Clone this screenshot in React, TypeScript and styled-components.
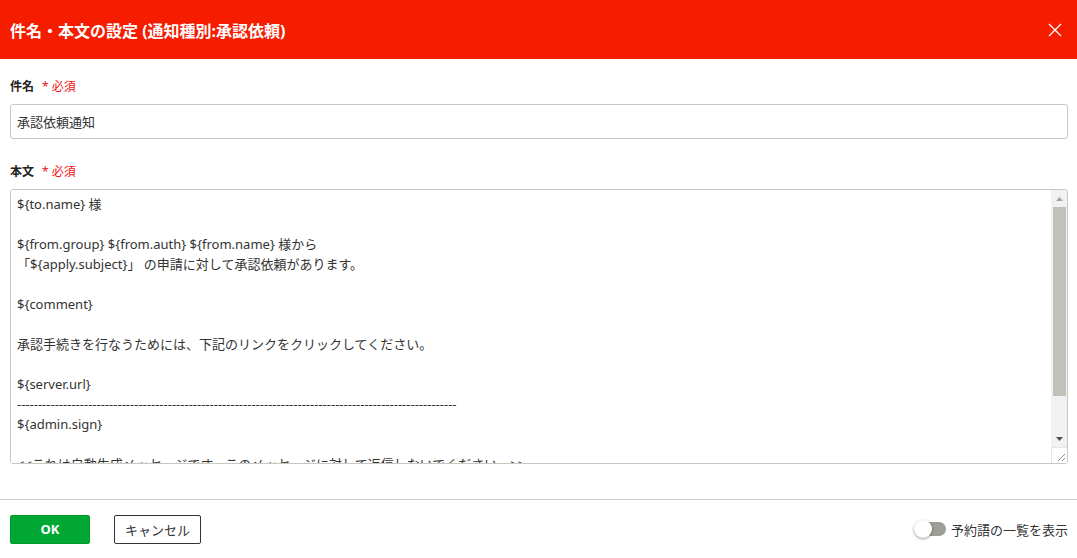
import { useState } from "react";
import { styled, createGlobalStyle } from "styled-components";

const GlobalStyle = createGlobalStyle`
  html, body {
    margin: 0;
    padding: 0;
    background: #ffffff;
    font-family: "Noto Sans", "Noto Sans CJK JP", sans-serif;
    color: #333333;
  }
  * {
    box-sizing: border-box;
  }
`;

const BODY_TEXT = `\${to.name} 様

\${from.group} \${from.auth} \${from.name} 様から
「\${apply.subject}」 の申請に対して承認依頼があります。

\${comment}

承認手続きを行なうためには、下記のリンクをクリックしてください。

\${server.url}
${"-".repeat(105)}
\${admin.sign}

<<これは自動生成メッセージです。このメッセージに対して返信しないでください。>>`;

const App = (): JSX.Element => {
  const [subject, setSubject] = useState("承認依頼通知");
  const [body, setBody] = useState(BODY_TEXT);
  const [showWords, setShowWords] = useState(false);

  return (
    <Dialog>
      <GlobalStyle />
      <Header>
        <h1>件名・本文の設定 (通知種別:承認依頼)</h1>
        <CloseButton aria-label="close">
          <svg width="14" height="14" viewBox="0 0 14 14">
            <path d="M1 1L13 13M13 1L1 13" stroke="#ffffff" strokeWidth="1.3" />
          </svg>
        </CloseButton>
      </Header>

      <Content>
        <Field>
          <Label>
            件名<Required>* 必須</Required>
          </Label>
          <TextInput
            type="text"
            value={subject}
            onChange={(e) => setSubject(e.target.value)}
          />
        </Field>

        <Field>
          <Label>
            本文<Required>* 必須</Required>
          </Label>
          <TextBox>
            <TextArea value={body} onChange={(e) => setBody(e.target.value)} />
            <ScrollBar>
              <Arrow>
                <svg width="7" height="4" viewBox="0 0 7 4">
                  <path d="M0 4L3.5 0L7 4Z" fill="#a3a3a3" />
                </svg>
              </Arrow>
              <ScrollTrack>
                <Thumb />
              </ScrollTrack>
              <Arrow>
                <svg width="7" height="4" viewBox="0 0 7 4">
                  <path d="M0 0L3.5 4L7 0Z" fill="#505050" />
                </svg>
              </Arrow>
              <Corner>
                <svg width="9" height="9" viewBox="0 0 9 9">
                  <path d="M1 8L8 1M5 8L8 5" stroke="#8c8c8c" strokeWidth="1" />
                </svg>
              </Corner>
            </ScrollBar>
          </TextBox>
        </Field>
      </Content>

      <Footer>
        <Buttons>
          <Button variant="primary">OK</Button>
          <Button variant="secondary">キャンセル</Button>
        </Buttons>
        <Toggle onClick={() => setShowWords(!showWords)}>
          <Track on={showWords}>
            <Knob on={showWords} />
          </Track>
          予約語の一覧を表示
        </Toggle>
      </Footer>
    </Dialog>
  );
};

export default App;

const Dialog = styled.div`
  width: 1077px;
  height: 558px;
  display: flex;
  flex-direction: column;
  background: #ffffff;
`;

const Header = styled.div`
  height: 59px;
  flex-shrink: 0;
  background: #f51c00;
  display: flex;
  align-items: center;
  justify-content: space-between;
  padding: 0 14px 0 10px;

  h1 {
    margin: 0;
    color: #ffffff;
    font-size: 16px;
    font-weight: 700;
  }
`;

const CloseButton = styled.button`
  border: none;
  background: transparent;
  padding: 0;
  width: 16px;
  height: 16px;
  display: flex;
  align-items: center;
  justify-content: center;
  cursor: pointer;
`;

const Content = styled.div`
  flex: 1;
  display: flex;
  flex-direction: column;
  gap: 24px;
  padding: 19px 9px 0 10px;
`;

const Field = styled.div`
  display: flex;
  flex-direction: column;
  gap: 8px;
`;

const Label = styled.label`
  display: flex;
  align-items: center;
  gap: 8px;
  font-size: 12px;
  font-weight: 700;
  line-height: 18px;
  color: #222222;
`;

const Required = styled.span`
  font-weight: 400;
  color: #f01414;
`;

const TextInput = styled.input`
  width: 100%;
  height: 35px;
  padding: 0 6px;
  border: 1px solid #c8c8c0;
  border-radius: 3px;
  outline: none;
  font-family: inherit;
  font-size: 13px;
  color: #333333;
`;

const TextBox = styled.div`
  display: flex;
  height: 275px;
  border: 1px solid #c8c8c0;
  border-radius: 3px;
  overflow: hidden;
`;

const TextArea = styled.textarea`
  flex: 1;
  height: 100%;
  padding: 4px 6px;
  border: none;
  outline: none;
  resize: none;
  overflow: hidden;
  font-family: inherit;
  font-size: 13px;
  line-height: 20px;
  color: #333333;
`;

const ScrollBar = styled.div`
  width: 16px;
  display: flex;
  flex-direction: column;
  background: #f1f1f1;
`;

const Arrow = styled.div`
  height: 17px;
  display: flex;
  align-items: center;
  justify-content: center;
`;

const ScrollTrack = styled.div`
  flex: 1;
  padding: 0 1px 34px 2px;
  display: flex;
`;

const Thumb = styled.div`
  flex: 1;
  background: #c1c0b9;
`;

const Corner = styled.div`
  height: 16px;
  background: #ffffff;
  border-top: 1px solid #e6e6e6;
  border-left: 1px solid #e6e6e6;
  display: flex;
  align-items: flex-end;
  justify-content: flex-end;
  padding: 0 1px 1px 0;
`;

const Footer = styled.div`
  height: 59px;
  flex-shrink: 0;
  border-top: 1px solid #d0d0d0;
  display: flex;
  align-items: center;
  justify-content: space-between;
  padding: 0 9px 0 10px;
`;

const Buttons = styled.div`
  display: flex;
  gap: 24px;
`;

const Button = styled.button<{ variant: "primary" | "secondary" }>`
  height: 29px;
  padding: 0;
  width: ${(p) => (p.variant === "primary" ? "80px" : "87px")};
  border-radius: 2px;
  font-family: inherit;
  font-size: 13px;
  cursor: pointer;
  border: 1px solid ${(p) => (p.variant === "primary" ? "#009a2e" : "#333333")};
  background: ${(p) => (p.variant === "primary" ? "#00a833" : "#ffffff")};
  color: ${(p) => (p.variant === "primary" ? "#ffffff" : "#333333")};
  font-weight: ${(p) => (p.variant === "primary" ? 700 : 400)};
`;

const Toggle = styled.label`
  display: flex;
  align-items: center;
  gap: 5px;
  font-size: 13px;
  color: #333333;
  cursor: pointer;
`;

const Track = styled.span<{ on: boolean }>`
  position: relative;
  width: 30px;
  height: 14px;
  border-radius: 7px;
  background: ${(p) => (p.on ? "#00a833" : "#9e9d96")};
`;

const Knob = styled.span<{ on: boolean }>`
  position: absolute;
  top: -2px;
  left: ${(p) => (p.on ? "12px" : "-2px")};
  width: 18px;
  height: 18px;
  border-radius: 50%;
  background: #ffffff;
  box-shadow: 0 1px 3px rgba(0, 0, 0, 0.4);
`;
